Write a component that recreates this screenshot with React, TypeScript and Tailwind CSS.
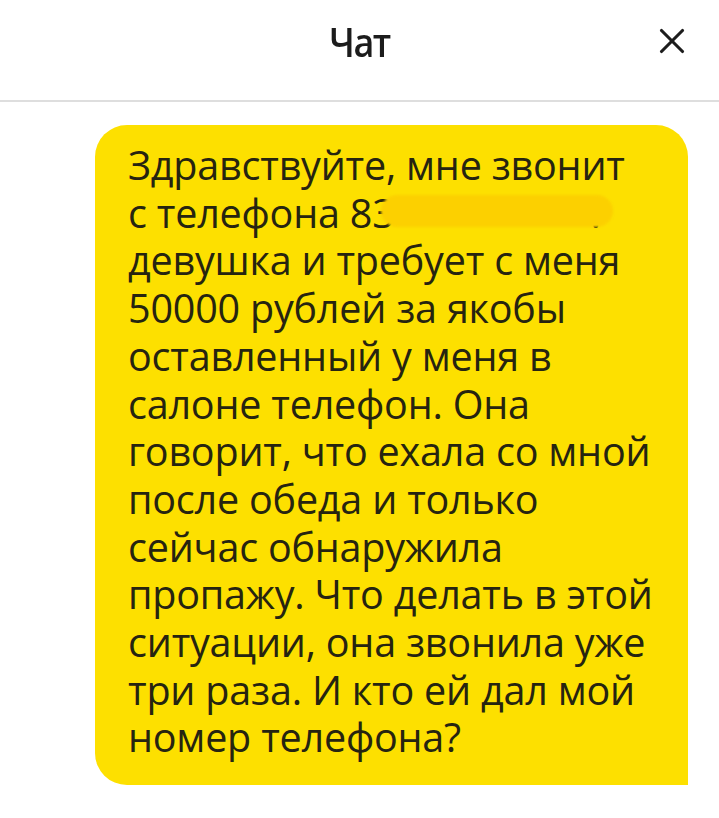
import { X } from 'lucide-react';

const lines = [
  'Здравствуйте, мне звонит',
  'с телефона 83',
  'девушка и требует с меня',
  '50000 рублей за якобы',
  'оставленный у меня в',
  'салоне телефон. Она',
  'говорит, что ехала со мной',
  'после обеда и только',
  'сейчас обнаружила',
  'пропажу. Что делать в этой',
  'ситуации, она звонила уже',
  'три раза. И кто ей дал мой',
  'номер телефона?',
];

export default function App() {
  return (
    <div className="w-[719px] h-[818px] bg-white overflow-hidden" style={{ fontFamily: '"Open Sans", "Noto Sans", sans-serif' }}>
      {/* Шапка */}
      <div className="relative h-[102px] flex items-start justify-center border-b-2 border-[#dedede]">
        <h1 className="mt-[16px] text-[36px] font-semibold text-[#1c1c1c] tracking-[-1.5px] scale-y-110">Чат</h1>
        <button className="absolute right-[26px] top-[20px] text-[#1c1c1c]">
          <X size={42} strokeWidth={1.8} />
        </button>
      </div>

      {/* Сообщение */}
      <div className="flex justify-end pt-[23px] pr-[31px]">
        <div className="w-[593px] bg-[#fde000] rounded-[32px] rounded-br-none pl-[33px] pr-[10px] pt-[17px] pb-[23px] text-[#262410] text-[39.5px] leading-[47.7px] tracking-[-0.2px]">
          {lines.map((l, i) =>
            i === 1 ? (
              <div key={i} className="relative whitespace-nowrap">
                {l}
                <span className="relative">
                  <span className="absolute left-[-14px] top-[9px] w-[232px] h-[32px] rounded-full bg-[#fcd000] blur-[1px]" />
                </span>
                <span className="inline-block w-[196px]" />.
              </div>
            ) : (
              <div key={i}>{l}</div>
            )
          )}
        </div>
      </div>
    </div>
  );
}
